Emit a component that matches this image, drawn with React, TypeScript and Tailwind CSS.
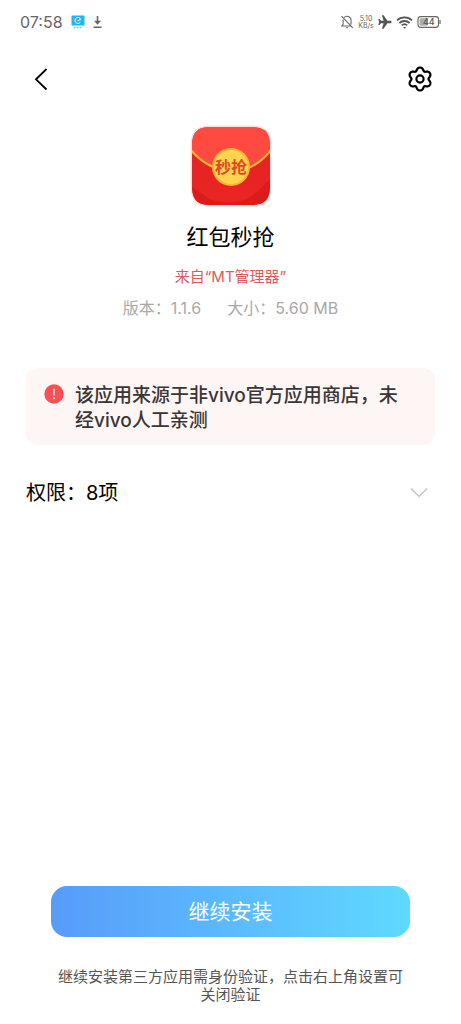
import React from "react";

const gearPath =
  Array.from({ length: 180 }, (_, i) => {
    const a = (i / 180) * Math.PI * 2;
    const r = 10.2 + 1.5 * Math.cos(6 * a) - 0.2 * Math.cos(12 * a);
    const x = 14 + r * Math.sin(a);
    const y = 14 - r * Math.cos(a);
    return `${i === 0 ? "M" : "L"}${x.toFixed(2)} ${y.toFixed(2)}`;
  }).join("") + "Z";

function StatusBar() {
  return (
    <header className="flex h-11 items-center justify-between pr-5 pl-5 text-[#666]">
      <div className="flex items-center gap-2">
        <span className="text-base leading-5">07:58</span>
        <svg width="14" height="14" viewBox="0 0 14 14" aria-hidden="true">
          <rect x="0.5" y="0.5" width="13" height="10" rx="0.8" fill="#1fb6f3" />
          <path d="M9.3 7.3A3 3 0 1 1 9.8 4.5L6.4 5.8" fill="none" stroke="#fff" strokeWidth="1" />
          <path d="M2.5 12.5h9" stroke="#6ccdf5" strokeWidth="1.5" strokeDasharray="2 1" />
        </svg>
        <svg width="9" height="12" viewBox="0 0 9 12" aria-hidden="true">
          <path d="M4.5 0v7M0.5 11.2h8" stroke="#666" strokeWidth="1.6" />
          <path d="M1 4.8h7l-3.5 4z" fill="#666" />
        </svg>
      </div>
      <div className="flex items-center gap-1">
        <svg width="14" height="14" viewBox="0 0 14 14" fill="none" stroke="#666" strokeWidth="1.1" aria-hidden="true">
          <path d="M4 2.6A4 4 0 0 1 11 5.2V9.5M3.1 4.5V9.2L1.8 11H10.5M5.8 12.8h2.4M1.5 1.2L12.8 12.8" />
        </svg>
        <div className="flex w-4 flex-col items-center text-[7px] leading-[7px]">
          <span>5.10</span>
          <span>KB/s</span>
        </div>
        <svg width="14" height="14" viewBox="0 0 14 14" aria-hidden="true">
          <path
            d="M13.6 7c0-.8-.6-1.3-1.4-1.3H9.4L5.6.3H3.9L5.6 5.7H3L1.6 4.1H.3L1.1 7 .3 9.9h1.3L3 8.3h2.6l-1.7 5.4h1.7l3.8-5.4h2.8c.8 0 1.4-.5 1.4-1.3z"
            fill="#555"
          />
        </svg>
        <svg width="17" height="13" viewBox="0 0 17 13" fill="none" stroke="#555" strokeWidth="1.8" aria-hidden="true">
          <path d="M1 4.4a11 11 0 0 1 15 0M3.4 7a7.5 7.5 0 0 1 10.2 0M5.8 9.4a4 4 0 0 1 5.4 0" />
          <path d="M7 11l1.5 1.8L10 11z" fill="#555" stroke="none" />
        </svg>
        <svg width="24" height="12" viewBox="0 0 24 12" aria-label="44%">
          <rect x="1" y="0.6" width="20.5" height="10.8" rx="2.6" fill="none" stroke="#666" strokeWidth="1.1" />
          <rect x="2.6" y="2.2" width="8" height="7.6" rx="1" fill="#aaa" />
          <path d="M23 4v4" stroke="#666" strokeWidth="1.2" />
          <text x="11.8" y="9.2" textAnchor="middle" fontSize="9" fontWeight="500" fill="#555">
            44
          </text>
        </svg>
      </div>
    </header>
  );
}

function AppIcon() {
  return (
    <svg width="82" height="82" viewBox="0 0 82 82" aria-label="红包秒抢">
      <defs>
        <clipPath id="tile">
          <path d="M2 22C2 7 7 2 22 2H60C75 2 80 7 80 22V60C80 75 75 80 60 80H22C7 80 2 75 2 60Z" />
        </clipPath>
        <linearGradient id="body" x1="0" y1="0" x2="0" y2="1">
          <stop offset="0" stopColor="#e52022" />
          <stop offset="1" stopColor="#ea2524" />
        </linearGradient>
      </defs>
      <path
        d="M0.5 22C0.5 6 6 0.5 22 0.5H60C76 0.5 81.5 6 81.5 22V60C81.5 76 76 81.5 60 81.5H22C6 81.5 0.5 76 0.5 60Z"
        fill="#f8dfdb"
      />
      <g clipPath="url(#tile)">
        <rect width="82" height="82" fill="url(#body)" />
        <path d="M0 60L14 70C20 76 28 77 40 77C60 77 68 66 82 52V82H0z" fill="#dc1b1d" />
        <path d="M0 24C12 39 26 45 41 46S70 39 82 24V0H0z" fill="#ff4a42" />
        <path d="M0 24C12 39 26 45 41 46S70 39 82 24" fill="none" stroke="#fbb62e" strokeWidth="2" />
      </g>
      <circle cx="41" cy="42" r="19" fill="#f9b52f" />
      <circle cx="41" cy="42" r="17" fill="#ffd451" />
      <text x="41" y="48" textAnchor="middle" fontSize="16" fontWeight="700" fill="#e04a20">
        秒抢
      </text>
    </svg>
  );
}

export default function App() {
  return (
    <div className="flex min-h-screen flex-col bg-white font-['Inter','Noto_Sans_CJK_SC',sans-serif] text-black" lang="zh-CN">
      <StatusBar />

      <nav className="flex h-[70px] items-center justify-between px-[27px]">
        <button type="button" aria-label="返回" className="flex size-7 items-center justify-center">
          <svg width="28" height="28" viewBox="0 0 28 28" fill="none" stroke="#000" strokeWidth="1.8" aria-hidden="true">
            <path d="M19.5 4L9 14.3L19.5 24.5" />
          </svg>
        </button>
        <button type="button" aria-label="设置" className="flex size-7 items-center justify-center">
          <svg width="28" height="28" viewBox="0 0 28 28" fill="none" stroke="#000" strokeWidth="2.2" aria-hidden="true">
            <path d={gearPath} strokeLinejoin="round" />
            <circle cx="14" cy="14" r="3.6" />
          </svg>
        </button>
      </nav>

      <main className="flex flex-1 flex-col">
        <section className="flex flex-col items-center pt-[11px]">
          <AppIcon />
          <h1 className="mt-4 text-[22px] leading-7">红包秒抢</h1>
          <p className="mt-[14px] text-[15px] leading-6 text-[#e05a5a]">来自“MT管理器”</p>
          <div className="mt-[7px] flex gap-[26px] text-base leading-6 text-[#a8a8a8]">
            <span>版本：1.1.6</span>
            <span>大小：5.60 MB</span>
          </div>
        </section>

        <section className="mx-[26px] mt-12 flex items-start gap-[11px] rounded-xl bg-[#fef5f5] pt-[15px] pr-6 pb-3 pl-[18px]">
          <svg className="mt-px shrink-0" width="20" height="20" viewBox="0 0 20 20" aria-hidden="true">
            <circle cx="10" cy="10" r="9.7" fill="#fa5055" />
            <path d="M10 4.8v6.8" stroke="#fff" strokeWidth="1.3" />
            <circle cx="10" cy="14.2" r="0.9" fill="#fff" />
          </svg>
          <p className="text-[19px] leading-[25px] font-medium text-[#3a3636]">该应用来源于非vivo官方应用商店，未经vivo人工亲测</p>
        </section>

        <button type="button" className="mx-[26px] mt-8 flex items-center justify-between text-left">
          <span className="text-xl leading-8">权限：8项</span>
          <svg className="mr-[7px]" width="18" height="12" viewBox="0 0 18 12" fill="none" stroke="#c4c4c4" strokeWidth="1.5" aria-hidden="true">
            <path d="M1 1.5L9 9.5L17 1.5" />
          </svg>
        </button>
      </main>

      <footer className="flex flex-col px-[51px] pb-5">
        <button
          type="button"
          className="h-[51px] rounded-2xl bg-linear-to-r from-[#589bf9] to-[#5fd9ff] pt-px text-[21px] text-white"
        >
          继续安装
        </button>
        <p className="mt-[31px] text-center text-[15px] leading-[18px] text-[#555]">
          继续安装第三方应用需身份验证，点击右上角设置可关闭验证
        </p>
      </footer>
    </div>
  );
}
